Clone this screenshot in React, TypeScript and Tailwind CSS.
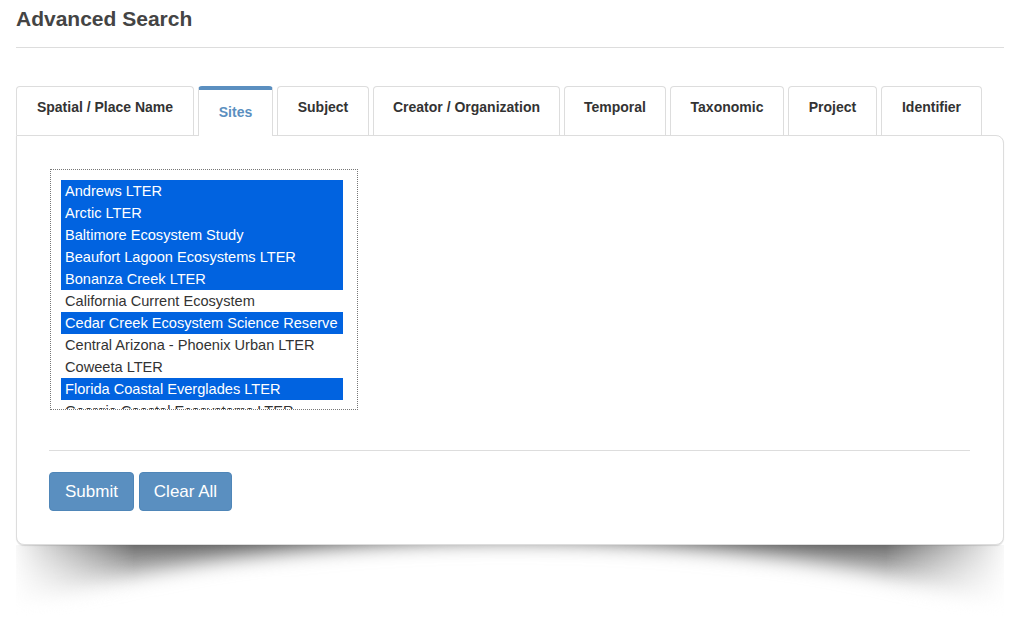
import { useState } from 'react';

const tabs = [
  { label: 'Spatial / Place Name', w: 'w-[178px]' },
  { label: 'Sites', w: 'w-[75px]' },
  { label: 'Subject', w: 'w-[92px]' },
  { label: 'Creator / Organization', w: 'w-[187px]' },
  { label: 'Temporal', w: 'w-[102px]' },
  { label: 'Taxonomic', w: 'w-[114px]' },
  { label: 'Project', w: 'w-[89px]' },
  { label: 'Identifier', w: 'w-[101px]' },
];

const sites = [
  'Andrews LTER',
  'Arctic LTER',
  'Baltimore Ecosystem Study',
  'Beaufort Lagoon Ecosystems LTER',
  'Bonanza Creek LTER',
  'California Current Ecosystem',
  'Cedar Creek Ecosystem Science Reserve',
  'Central Arizona - Phoenix Urban LTER',
  'Coweeta LTER',
  'Florida Coastal Everglades LTER',
  'Georgia Coastal Ecosystems LTER',
  'Harvard Forest LTER',
  'Hubbard Brook LTER',
];

// curved drop shadow under the panel
function CurvedShadow() {
  return (
    <svg width="988" height="80" viewBox="0 0 988 80" className="block">
      <defs>
        <linearGradient id="vfade" x1="0" y1="0" x2="0" y2="1">
          <stop offset="0" stopColor="#555" stopOpacity="0.85" />
          <stop offset="0.45" stopColor="#888" stopOpacity="0.45" />
          <stop offset="0.9" stopColor="#bbb" stopOpacity="0" />
        </linearGradient>
        <linearGradient id="hfade" x1="0" y1="0" x2="1" y2="0">
          <stop offset="0" stopColor="#fff" stopOpacity="0.05" />
          <stop offset="0.12" stopColor="#fff" stopOpacity="1" />
          <stop offset="0.88" stopColor="#fff" stopOpacity="1" />
          <stop offset="1" stopColor="#fff" stopOpacity="0.05" />
        </linearGradient>
        <filter id="blur" x="-20%" y="-50%" width="140%" height="200%">
          <feGaussianBlur stdDeviation="10" />
        </filter>
        <mask id="edges">
          <rect x="0" y="0" width="988" height="80" fill="url(#hfade)" />
        </mask>
      </defs>
      <g mask="url(#edges)">
        <rect x="0" y="0" width="988" height="80" fill="url(#vfade)" />
        <ellipse cx="494" cy="162" rx="590" ry="166" fill="#fff" filter="url(#blur)" />
      </g>
    </svg>
  );
}

export default function AdvancedSearch() {
  const [active, setActive] = useState(1);
  const [selected, setSelected] = useState<number[]>([0, 1, 2, 3, 4, 6, 9]);

  const toggle = (i: number) =>
    setSelected(prev => (prev.includes(i) ? prev.filter(x => x !== i) : [...prev, i]));

  return (
    <div className="min-h-screen bg-white font-['Liberation_Sans',Arial,sans-serif]">
      <div className="pl-4 pr-5 pt-[6px]">
        <h1 className="text-[21px] leading-[26px] font-bold text-[#444]">Advanced Search</h1>
        <div className="mt-[15px] border-t border-[#ddd]" />

        {/* Tabs */}
        <div className="mt-[38px] flex items-start gap-1">
          {tabs.map((t, i) =>
            i === active ? (
              <div
                key={t.label}
                onClick={() => setActive(i)}
                className={`${t.w} relative z-10 -mb-px h-[50px] cursor-pointer rounded-t-[4px] border-x border-t-4 border-x-[#ddd] border-t-[#5b8fc0] bg-white pt-[12px] text-center text-[14px] leading-5 font-bold text-[#5b8fc0]`}
              >
                {t.label}
              </div>
            ) : (
              <div
                key={t.label}
                onClick={() => setActive(i)}
                className={`${t.w} h-[49px] cursor-pointer rounded-t-[4px] border-x border-t border-[#ddd] bg-white pt-[10px] text-center text-[14px] leading-5 font-bold text-[#333]`}
              >
                {t.label}
              </div>
            )
          )}
        </div>

        {/* Panel */}
        <div className="rounded-tr-lg rounded-b-lg border border-[#ddd] bg-white p-[33px] shadow-[0_1px_1px_rgba(0,0,0,0.12)]">
          <div className="h-[241px] w-[308px] overflow-hidden border border-dotted border-[#777] pt-[10px] pl-[10px]">
            {sites.map((s, i) => (
              <div
                key={s}
                onClick={() => toggle(i)}
                className={`h-[22px] w-[282px] cursor-default px-1 text-[14.6px] leading-[22px] whitespace-nowrap ${
                  selected.includes(i) ? 'bg-[#0163e0] text-white' : 'text-[#333]'
                }`}
              >
                {s}
              </div>
            ))}
          </div>

          <div className="mt-[40px] -ml-px border-t border-[#ddd]" />

          <div className="mt-[21px] -ml-px flex gap-[5px]">
            <button className="h-[39px] w-[85px] rounded-[4px] border border-[#4f86b8] bg-[#5a8fc0] text-[17px] text-white">
              Submit
            </button>
            <button
              onClick={() => setSelected([])}
              className="h-[39px] w-[93px] rounded-[4px] border border-[#4f86b8] bg-[#5a8fc0] text-[17px] text-white"
            >
              Clear All
            </button>
          </div>
        </div>

        <CurvedShadow />
      </div>
    </div>
  );
}
